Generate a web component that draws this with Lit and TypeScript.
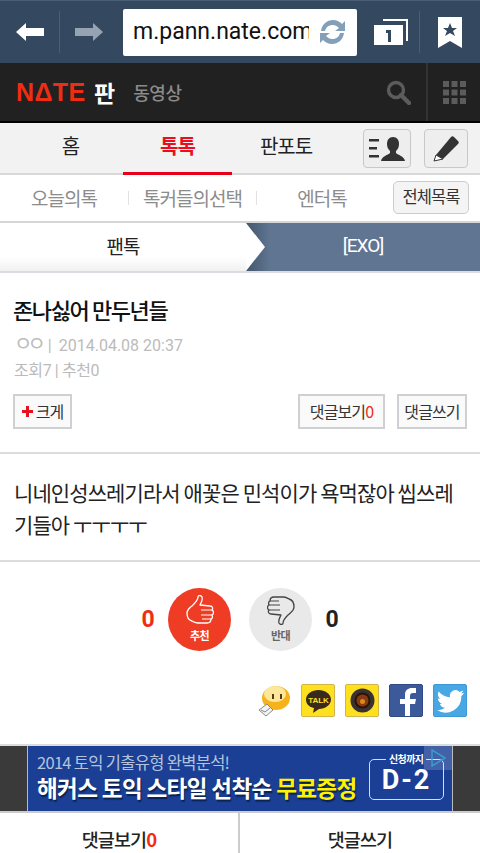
import { LitElement, html, css, svg } from "lit";
import { customElement } from "lit/decorators.js";

const thumb = (color: string) => svg`<path d="M1 18C1 14 4 13 7 10 10 7 12 5 12 2 12 0 15 0 16 2 17 5 15 8 14 10L24 11C27 11 27 14 26 15 28 16 28 19 26 20 27 22 26 24 25 24 25 27 23 28 21 28H12C9 28 8 27 6 26 2 25 1 22 1 18Z" fill="none" stroke="${color}" stroke-width="1.3" stroke-linejoin="round"/><path d="M15 15H26M15 20H26M16 24H25" fill="none" stroke="${color}" stroke-width="1.2"/>`;

@customElement("app-root")
export class AppRoot extends LitElement {
  static styles = css`
    :host { display: block; width: 480px; height: 853px; overflow: hidden; background: #fff; font-family: "Noto Sans CJK KR", "Roboto", sans-serif; color: #222; }
    svg { display: block; }
    .chrome { height: 63px; background: #34495f; border-top: 1px solid #4a5f75; box-sizing: border-box; display: flex; align-items: center; }
    .nav-btn { width: 60px; height: 42px; display: flex; align-items: center; justify-content: center; box-sizing: border-box; }
    .nav-btn.first { border-right: 1px solid #4b5f74; }
    .nav-btn.next { width: 63px; padding-right: 5px; }
    .url { width: 234px; height: 47px; box-sizing: border-box; background: #fff; border-radius: 2px; display: flex; align-items: center; padding-left: 10px; gap: 9px; flex: none; }
    .url-text { font: 23px/30px "Roboto", sans-serif; color: #111; width: 176px; overflow: hidden; white-space: nowrap; flex: none; }
    .tabs-btn { width: 63px; height: 42px; display: flex; align-items: center; justify-content: center; border-right: 1px solid #4b5f74; box-sizing: border-box; padding-left: 7px; }
    .book { flex: 1; display: flex; justify-content: center; }
    .site { height: 60px; background: #212121; border-bottom: 2px solid #000; box-sizing: border-box; display: flex; align-items: center; }
    .logo { margin-left: 16px; font: 700 25px/30px "Liberation Sans", sans-serif; color: #f02d12; letter-spacing: 0.4px; width: 69px; }
    .pan { font-size: 23px; font-weight: 700; color: #fff; line-height: 30px; margin-left: 9px; }
    .video { font-size: 18px; font-weight: 500; color: #8a8a8a; line-height: 30px; margin-left: 18px; letter-spacing: -0.4px; flex: 1; }
    .search { width: 38px; display: flex; justify-content: center; margin-right: 9px; }
    .grid-btn { width: 54px; height: 58px; border-left: 2px solid #333; box-sizing: border-box; display: flex; align-items: center; justify-content: center; }
    .tabs { height: 52px; background: #f2f2f2; border-bottom: 2px solid #d8d8d8; box-sizing: border-box; display: flex; }
    .tab { width: 109px; font-size: 20px; line-height: 46px; text-align: center; font-weight: 400; letter-spacing: -1px; color: #222; box-sizing: border-box; height: 52px; flex: none; }
    .tab.on { color: #e8101e; font-weight: 700; border-bottom: 3px solid #e8001a; }
    .tab.home { width: 123px; padding-left: 18px; }
    .tab.fan { width: 108px; }
    .icon-btn { height: 39px; margin-top: 6px; box-sizing: border-box; border: 1px solid #c8c8c8; border-radius: 4px; background: #eee; display: flex; align-items: center; justify-content: center; flex: none; }
    .i1 { width: 48px; margin-left: 23px; }
    .i2 { width: 44px; margin-left: 13px; }
    .sub { height: 48px; border-bottom: 2px solid #d6d6d6; box-sizing: border-box; display: flex; align-items: center; background: #fff; }
    .sub span { font-size: 19px; color: #8c8c8c; letter-spacing: -1px; text-align: center; flex: none; line-height: 30px; }
    .sub .s1, .sub .s2 { height: 14px; border-right: 1px solid #e2e2e2; display: flex; align-items: center; justify-content: center; box-sizing: border-box; }
    .s1 { width: 129px; }
    .s2 { width: 128px; }
    .s3 { width: 136px; padding-right: 6px; box-sizing: border-box; }
    .sub .all { width: 76px; height: 33px; box-sizing: border-box; border: 1px solid #ccc; border-radius: 5px; background: #f4f4f4; color: #333; font-size: 16.5px; line-height: 29px; letter-spacing: -0.9px; margin-top: -1px; }
    .crumb { height: 50px; display: flex; position: relative; border-bottom: 2px solid #d9dde2; box-sizing: border-box; background: linear-gradient(#fff 70%, #f1f1f1); }
    .crumb .a { width: 246px; text-align: center; font-size: 19px; line-height: 46px; letter-spacing: -1px; color: #222; font-weight: 400; }
    .crumb .bx { flex: 1; background: linear-gradient(90deg, #44566d 0, #5f7591 24px); color: #fff; font: 19px/46px "Roboto", sans-serif; text-align: center; letter-spacing: -1px; }
    .arrow { position: absolute; left: 246px; top: 0; }
    .head { padding: 21px 14px 0; height: 181px; box-sizing: border-box; border-bottom: 2px solid #dcdcdc; }
    h1 { margin: 0 0 0 -1px; font-size: 22px; line-height: 30px; font-weight: 500; color: #111; letter-spacing: -1.4px; }
    .meta { font: 16px/24px "Roboto", "Noto Sans CJK KR", sans-serif; color: #bbb; margin-top: 7px; white-space: nowrap; }
    .meta + .meta { margin-top: 1px; letter-spacing: -0.4px; }
    .oo { font: 20px/24px "Noto Sans CJK KR", sans-serif; letter-spacing: -5px; margin-right: 7px; }
    .date { margin-left: 7px; }
    .btns { display: flex; margin-top: 11px; }
    .btn { height: 35px; box-sizing: border-box; border: 2px solid #cfd0d4; background: #fafafa; font-size: 16px; line-height: 31px; text-align: center; letter-spacing: -0.9px; color: #333; flex: none; }
    .big { width: 59px; display: flex; align-items: center; justify-content: center; gap: 3px; margin: 0 auto 0 -1px; }
    .see { width: 87px; margin-right: 12px; }
    .write { width: 70px; margin-right: -1px; }
    .red { color: #f02d12; }
    .body { margin: 0; padding: 22px 20px 0 14px; height: 108px; box-sizing: border-box; font-size: 21px; line-height: 32px; letter-spacing: -0.9px; border-bottom: 2px solid #dcdcdc; color: #222; }
    .vote { display: flex; align-items: center; justify-content: center; height: 63px; margin-top: 26px; }
    .n { font: 700 23px/30px "Roboto", sans-serif; width: 24px; text-align: center; }
    .c { width: 63px; height: 63px; border-radius: 50%; display: flex; flex-direction: column; align-items: center; box-sizing: border-box; padding-top: 7px; gap: 4px; font-size: 11px; line-height: 13px; font-weight: 700; letter-spacing: -0.6px; }
    .up { background: #ee3d24; color: #fff; margin: 0 18px 0 8px; }
    .down { background: #e9e9e9; color: #666; margin: 0 8px 0 0; }
    .flip { transform: rotate(180deg); }
    .share { display: flex; justify-content: flex-end; gap: 10px; padding-right: 13px; margin-top: 33px; height: 33px; }
    .sq { width: 34px; height: 33px; border-radius: 2px; box-sizing: border-box; display: flex; align-items: center; justify-content: center; overflow: hidden; }
    .kakao { background: #ffe01f; border: 1px solid #d4b54a; }
    .fb { background: #3c5a9a; border: 1px solid #2f4a86; align-items: flex-end; }
    .tw { background: #48a8e4; border: 1px solid #3c98d6; }
    .ad { margin-top: 27px; height: 69px; background: #3a3a3a; border-top: 2px solid #dcdcdc; border-bottom: 2px solid #ccc; box-sizing: border-box; display: flex; justify-content: center; }
    .banner { width: 426px; background: #1a3f94; border-left: 1px solid #bbb; border-right: 1px solid #bbb; box-sizing: border-box; position: relative; padding: 6px 0 0 9px; }
    .l1 { font-size: 16.5px; line-height: 20px; color: #b5c3dd; letter-spacing: -0.7px; white-space: nowrap; }
    .l2 { font-size: 22.5px; line-height: 30px; font-weight: 700; color: #fff; letter-spacing: -0.6px; white-space: nowrap; text-shadow: 1px 2px 1px #0b2250; }
    .l2 i { font-style: normal; color: #fff200; }
    .dday { position: absolute; left: 341px; top: 13px; width: 75px; height: 41px; border: 1px solid #d5dcec; border-radius: 5px; box-sizing: border-box; color: #fff; font: 700 27px/40px "Roboto", sans-serif; text-align: center; letter-spacing: 2px; }
    .dlabel { position: absolute; left: 358px; top: 7px; font-size: 10px; line-height: 12px; color: #fff; background: #1a3f94; padding: 0 3px; letter-spacing: -0.6px; font-weight: 700; }
    .adm { position: absolute; right: 0; top: 0; width: 28px; height: 24px; background: rgba(255,255,255,.18); display: flex; align-items: center; justify-content: center; }
    .foot { display: flex; height: 40px; }
    .foot div { width: 240px; text-align: center; font-size: 18.5px; line-height: 52px; letter-spacing: -0.9px; color: #222; font-weight: 500; box-sizing: border-box; }
    .foot div:first-child { border-right: 2px solid #ccc; }
    .foot .red { font-weight: 700; }
  `;

  render() {
    return html`
      <div class="chrome">
        <div class="nav-btn first"><svg width="30" height="20" viewBox="0 0 30 20"><path d="M1 10 11 1v5h18v8H11v5z" fill="#fff"/></svg></div>
        <div class="nav-btn next"><svg width="30" height="20" viewBox="0 0 30 20"><path d="M29 10 19 1v5H1v8h18v5z" fill="#95a3b2"/></svg></div>
        <div class="url">
          <span class="url-text">m.pann.nate.com</span>
          <svg width="29" height="28" viewBox="0 0 29 28"><path d="M3 13C4 6 9 2 15 2c4 0 7 2 9 4l3-3v10H17l4-3c-2-2-4-3-6-3-4 0-7 2-8 6z" fill="#84a0b8"/><path d="M26 15c-1 7-6 11-12 11-4 0-7-2-9-4l-3 3V15h10l-4 3c2 2 4 3 6 3 4 0 7-2 8-6z" fill="#84a0b8"/></svg>
        </div>
        <div class="tabs-btn"><svg width="35" height="28" viewBox="0 0 35 28"><path d="M9 1h25v22h-2V3H9z" fill="#fff"/><path d="M0 7h29v20H0z" fill="#fff"/><path d="M12 12h5v12h-3v-9h-2z" fill="#34495f"/></svg></div>
        <div class="book"><svg width="24" height="31" viewBox="0 0 24 31"><path d="M0 0h24v31l-12-7-12 7z" fill="#fff"/><path d="m12 6 2 5h5l-4 3 2 5-5-3-5 3 2-5-4-3h5z" fill="#34495f"/></svg></div>
      </div>
      <div class="site">
        <span class="logo">NΔTE</span><span class="pan">판</span><span class="video">동영상</span>
        <div class="search"><svg width="25" height="25" viewBox="0 0 25 25"><circle cx="10" cy="10" r="7.5" fill="none" stroke="#5c5c5c" stroke-width="3.4"/><path d="m15 15 8 8" stroke="#5c5c5c" stroke-width="4.4" stroke-linecap="round"/></svg></div>
        <div class="grid-btn"><svg width="23" height="23" viewBox="0 0 23 23" fill="#5c5c5c"><rect width="6" height="6"/><rect x="8.5" width="6" height="6"/><rect x="17" width="6" height="6"/><rect y="8.5" width="6" height="6"/><rect x="8.5" y="8.5" width="6" height="6"/><rect x="17" y="8.5" width="6" height="6"/><rect y="17" width="6" height="6"/><rect x="8.5" y="17" width="6" height="6"/><rect x="17" y="17" width="6" height="6"/></svg></div>
      </div>
      <div class="tabs">
        <div class="tab home">홈</div><div class="tab on">톡톡</div><div class="tab fan">판포토</div>
        <div class="icon-btn i1"><svg width="36" height="26" viewBox="0 0 36 26" fill="#333"><rect y="3" width="10" height="2.500"/><rect y="11" width="8" height="2.500"/><rect y="19" width="10" height="2.500"/><path d="M24 1c4 0 6 3 6 7 0 3-1 5-3 7v2c2 2 8 3 9 8H12c1-5 7-6 9-8v-2c-2-2-3-4-3-7 0-4 2-7 6-7z"/></svg></div>
        <div class="icon-btn i2"><svg width="26" height="26" viewBox="0 0 26 26"><path d="M18 1c1-1 2-1 3 0l4 4c1 1 1 2 0 3L10 23 3 19z" fill="#333"/><path d="M3 19l7 4-9 2z" fill="#fff" stroke="#333"/></svg></div>
      </div>
      <div class="sub">
        <span class="s1">오늘의톡</span><span class="s2">톡커들의선택</span><span class="s3">엔터톡</span><span class="all">전체목록</span>
      </div>
      <div class="crumb">
        <div class="a">팬톡</div><div class="bx">[EXO]</div>
        <svg class="arrow" width="20" height="48" viewBox="0 0 20 48"><path d="M0 0l19 24L0 48z" fill="#fff"/></svg>
      </div>
      <div class="head">
        <h1>존나싫어 만두년들</h1>
        <div class="meta"><span class="oo">ㅇㅇ</span>|<span class="date">2014.04.08 20:37</span></div>
        <div class="meta">조회7 | 추천0</div>
        <div class="btns">
          <div class="btn big"><svg width="11" height="11" viewBox="0 0 11 11"><path d="M4 0h3v4h4v3H7v4H4V7H0V4h4z" fill="#e8101e"/></svg>크게</div>
          <div class="btn see">댓글보기<span class="red">0</span></div>
          <div class="btn write">댓글쓰기</div>
        </div>
      </div>
      <p class="body">니네인성쓰레기라서 애꽃은 민석이가 욕먹잖아 씹쓰레기들아 ㅜㅜㅜㅜ</p>
      <div class="vote">
        <span class="n red">0</span>
        <div class="c up"><svg width="28" height="30" viewBox="0 0 28 30">${thumb("#fff")}</svg><span>추천</span></div>
        <div class="c down"><svg class="flip" width="28" height="30" viewBox="0 0 28 30">${thumb("#444")}</svg><span>반대</span></div>
        <span class="n">0</span>
      </div>
      <div class="share">
        <div class="sq"><svg width="33" height="33" viewBox="0 0 33 33"><ellipse cx="18" cy="14" rx="14" ry="12" fill="#f6b21b"/><ellipse cx="17" cy="10" rx="11" ry="8" fill="#fde79a"/><rect x="14" y="10" width="2" height="5" fill="#5a3a10"/><rect x="22" y="10" width="2" height="5" fill="#5a3a10"/><path d="M1 26l8-6 6 6-7 6z" fill="#f4f4f4" stroke="#888"/><path d="m3 26 4 2 5-4" fill="none" stroke="#888"/></svg></div>
        <div class="sq kakao"><svg width="27" height="27" viewBox="0 0 27 27"><path d="M13.500 3C20 3 26 7 26 12.500S20 22 14 22l-6 4 1-5C4 20 1 17 1 12.500 1 7 7 3 13.500 3z" fill="#3a2a1c"/><text x="13.500" y="16" font-family="Liberation Sans" font-size="8" font-weight="700" text-anchor="middle" fill="#ffe01f">TALK</text></svg></div>
        <div class="sq kakao"><svg width="25" height="25" viewBox="0 0 25 25"><circle cx="12.500" cy="12.500" r="12" fill="#3a3230"/><circle cx="12.500" cy="12.500" r="8" fill="#2a1408"/><circle cx="12.500" cy="12.500" r="6" fill="#8a3a10"/><circle cx="12.500" cy="13.500" r="2.500" fill="#d78a20"/></svg></div>
        <div class="sq fb"><svg width="31" height="31" viewBox="0 0 31 31"><path d="M14 31V19h-5v-5h5v-4c0-5 3-7 7-7h4v5h-3c-2 0-3 1-3 3v3h6l-1 5h-5v12z" fill="#fff"/></svg></div>
        <div class="sq tw"><svg width="27" height="27" viewBox="0 0 24 24"><path d="M24 5c-1 .4-2 .7-3 .8 1-.6 2-1.600 2.400-2.700-1 .6-2.100 1-3.300 1.300A5 5 0 0 0 11.600 9C7.500 8.800 3.900 6.900 1.500 3.900c-1.300 2.300-.7 5.200 1.500 6.700-.8 0-1.600-.2-2.200-.6 0 2.400 1.700 4.500 4 5-.7.200-1.500.2-2.200.1.600 2 2.500 3.400 4.600 3.400A10 10 0 0 1 0 20.500 14 14 0 0 0 21.600 8c1-.7 1.800-1.700 2.400-3z" fill="#fff"/></svg></div>
      </div>
      <div class="ad">
        <div class="banner">
          <div class="l1">2014 토익 기출유형 완벽분석!</div>
          <div class="l2">해커스 토익 스타일 선착순 <i>무료증정</i></div>
          <div class="dday">D-2</div><div class="dlabel">신청까지</div>
          <div class="adm"><svg width="18" height="18" viewBox="0 0 18 18"><path d="M3 1l13 8-13 8z" fill="none" stroke="#3a9ad0" stroke-width="1.500"/></svg></div>
        </div>
      </div>
      <div class="foot"><div>댓글보기<span class="red">0</span></div><div>댓글쓰기</div></div>
    `;
  }
}
